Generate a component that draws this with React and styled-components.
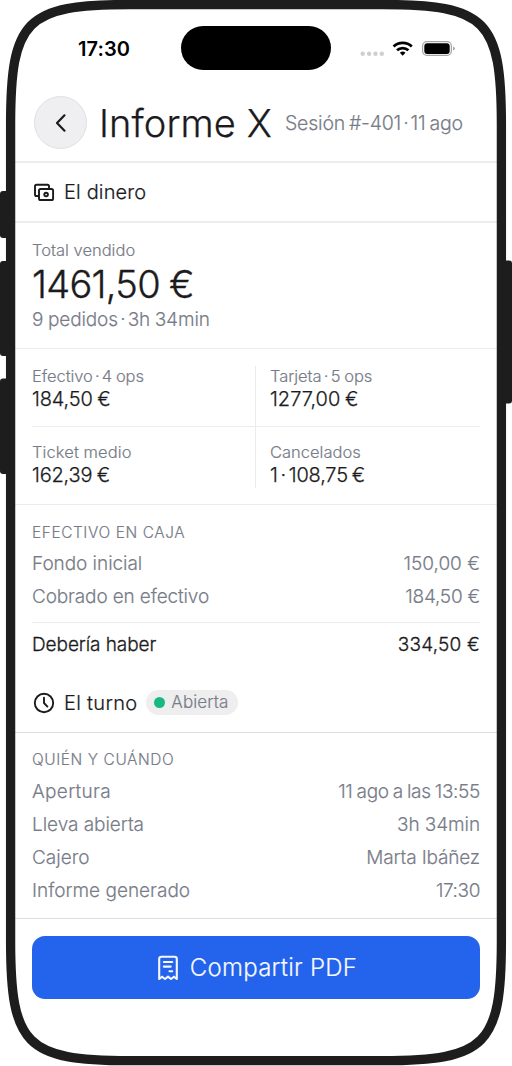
import React from 'react';
import styled, { createGlobalStyle } from 'styled-components';

const ink = '#1b1b1d';
const muted = '#787c88';
const line = '#ececee';

const GlobalStyle = createGlobalStyle`
  * { box-sizing: border-box; }
  body {
    margin: 0;
    background: #fff;
    color: ${ink};
    font-family: Inter, "Liberation Sans", sans-serif;
    font-weight: 300;
    overflow: hidden;
  }
`;

const Device = styled.div`
  position: relative;
  width: 512px;
  height: 1066px;
`;

const Bezel = styled.svg`
  position: absolute;
  inset: 0;
  pointer-events: none;
`;

const Screen = styled.main`
  display: flex;
  flex-direction: column;
  height: 1056px;
  margin: 0 15px;
  padding-top: 9px;
`;

const StatusBar = styled.div`
  display: grid;
  grid-template-columns: 1fr 150px 1fr;
  height: 76px;
  padding: 17px 0 0;
`;

const Clock = styled.time`
  justify-self: start;
  margin-left: 63px;
  font-size: 20px;
  font-weight: 600;
  line-height: 46px;
  color: #000;
  letter-spacing: 0.1px;
`;

const Island = styled.div`
  height: 44px;
  border-radius: 22px;
  background: #000;
`;

const StatusIcons = styled.svg`
  display: block;
  margin: 12px 0 0 26px;
`;

const Header = styled.header`
  display: flex;
  align-items: center;
  height: 78px;
  padding: 0 19px 1px;
  border-bottom: 2px solid ${line};
`;

const BackButton = styled.button`
  display: grid;
  place-items: center;
  width: 53px;
  height: 53px;
  padding: 0;
  border: 1px solid #e0e0e4;
  border-radius: 50%;
  background: #efeff1;
`;

const Text = styled.span`
  letter-spacing: ${({ $track = 0 }) => $track}px;
  word-spacing: ${({ $gap = 0 }) => $gap}px;
  white-space: nowrap;
  -webkit-text-stroke: 0.18px currentColor;
`;

const Separator = styled.span`
  word-spacing: ${({ $gap = -2.4 }) => $gap}px;
`;

const Title = styled(Text).attrs({ as: 'h1' })`
  margin: 0 0 0 12px;
  font-size: 38px;
  font-weight: 300;
  line-height: 48px;
  -webkit-text-stroke-width: 0.25px;
`;

const Session = styled(Text)`
  margin-left: 13px;
  font-size: 19.5px;
  color: ${muted};
`;

const SectionHeader = styled.div`
  display: flex;
  align-items: center;
  height: 60px;
  padding: 0 17px;
  border-bottom: ${({ $thin }) => ($thin ? '1px solid #dededf' : `2px solid ${line}`)};
`;

const SectionTitle = styled(Text).attrs({ as: 'h2' })`
  margin: 0 0 0 8px;
  font-size: 20px;
  font-weight: 300;
  line-height: 26px;
  -webkit-text-stroke-width: 0.22px;
`;

const Badge = styled.span`
  display: flex;
  align-items: center;
  gap: 6px;
  height: 25px;
  margin-left: 9px;
  padding: 0 10px 0 8px;
  border-radius: 13px;
  background: #eeeeef;
  color: ${muted};
  font-size: 17px;
  line-height: 25px;
`;

const Dot = styled.i`
  width: 11px;
  height: 11px;
  border-radius: 50%;
  background: #18b981;
`;

const Summary = styled.section`
  display: flex;
  flex-direction: column;
  height: 126px;
  padding: 16px 17px 0;
  border-bottom: 1px solid ${line};
`;

const Label = styled(Text)`
  font-size: 16.5px;
  line-height: 22px;
  color: ${muted};
`;

const Total = styled(Text)`
  font-size: 38px;
  line-height: 46px;
  -webkit-text-stroke-width: 0.35px;
`;

const Detail = styled(Text)`
  font-size: 19px;
  line-height: 26px;
  color: ${muted};
`;

const Metrics = styled.section`
  display: grid;
  grid-template-columns: 223px 225px;
  height: 156px;
  padding: 17px 17px 16px;
  border-bottom: 1px solid ${line};
`;

const Metric = styled.div`
  display: flex;
  flex-direction: column;
  height: 61px;
  padding-top: ${({ $lower }) => ($lower ? 14 : 0)}px;
  padding-left: ${({ $right }) => ($right ? 14 : 0)}px;
  border-left: ${({ $right }) => ($right ? `1px solid ${line}` : 'none')};
  border-bottom: ${({ $lower }) => ($lower ? 'none' : `1px solid ${line}`)};
`;

const MetricLabel = styled(Label)`
  line-height: ${({ $lower }) => ($lower ? 22 : 21)}px;
`;

const Value = styled(Text)`
  font-size: 20px;
  line-height: 24px;
  -webkit-text-stroke-width: 0.25px;
`;

const Group = styled.section`
  padding: ${({ $top = 16 }) => $top}px 17px 0;
`;

const GroupTitle = styled(Text).attrs({ as: 'h3' })`
  margin: 0 0 ${({ $after = 4 }) => $after}px;
  font-size: 15.4px;
  font-weight: 300;
  line-height: 21px;
  color: ${muted};
`;

const Row = styled.div`
  display: flex;
  justify-content: space-between;
  font-size: 19px;
  line-height: 33.2px;
  color: ${muted};
`;

const TotalRow = styled(Row)`
  margin-top: 9px;
  padding-top: 5px;
  border-top: 1px solid ${line};
  color: ${ink};

  ${Text} {
    -webkit-text-stroke-width: 0.28px;
  }
`;

const ShiftHeader = styled(SectionHeader)`
  margin-top: 12px;
  height: 59px;
`;

const Footer = styled.footer`
  margin-top: 11px;
  padding: 17px 17px 0;
  border-top: 1px solid #dededf;
`;

const ShareButton = styled.button`
  display: flex;
  align-items: center;
  justify-content: center;
  gap: 11px;
  width: 448px;
  height: 63px;
  padding: 0 0 0 2px;
  border: 0;
  border-radius: 13px;
  background: #2463eb;
  color: #f5f9ff;
  font: 300 24px/30px Inter, "Liberation Sans", sans-serif;
`;

function DeviceFrame() {
  return (
    <Bezel width="512" height="1066" viewBox="0 0 512 1066" fill="none" aria-hidden="true">
      <g fill="#1d1d1d">
        <rect x="0" y="191" width="14" height="47" rx="3" />
        <rect x="0" y="261" width="14" height="95" rx="3" />
        <rect x="0" y="378.500" width="14" height="95.500" rx="3" />
        <rect x="498" y="260.500" width="14" height="143" rx="3" />
      </g>
      <path
        d="M10.600 125C10.600 20 25.600 4.500 130 4.500H382C486.400 4.500 501.400 20 501.400 125V941C501.400 1045 486.400 1060.700 382 1060.700H130C25.600 1060.700 10.600 1045 10.600 941Z"
        stroke="#1d1d1d"
        strokeWidth="9.300"
      />
    </Bezel>
  );
}

function StatusGlyphs() {
  return (
    <StatusIcons width="100" height="20" viewBox="0 0 100 20" fill="none" aria-hidden="true">
      <g fill="#cfcfcf">
        <circle cx="5.700" cy="15.700" r="2.200" />
        <circle cx="12.100" cy="15.700" r="2.200" />
        <circle cx="18.500" cy="15.700" r="2.200" />
        <circle cx="24.800" cy="15.700" r="2.200" />
      </g>
      <g stroke="#000" strokeWidth="2.700">
        <path d="M36.600 8.500A13 13 0 0 1 54.800 8.500" />
        <path d="M40 12.300A8.300 8.300 0 0 1 51.400 12.300" />
      </g>
      <path d="M42.900 14.700Q45.700 12.200 48.500 14.700L45.700 17.700Z" fill="#000" />
      <rect x="65.600" y="3.600" width="28.800" height="13.800" rx="4.300" stroke="#a5a5a5" strokeWidth="1.200" />
      <rect x="67.300" y="5.200" width="25.400" height="10.800" rx="2.900" fill="#000" />
      <path d="M96 8.500Q97.800 9.200 97.800 10.500T96 12.500Z" fill="#a5a5a5" />
    </StatusIcons>
  );
}

function ChevronIcon() {
  return (
    <svg width="24" height="24" viewBox="0 0 24 24" fill="none" stroke={ink} strokeWidth="2.200" strokeLinecap="round" strokeLinejoin="round">
      <path d="M15.500 4.300 8 12l7.500 7.700" />
    </svg>
  );
}

function CashIcon() {
  return (
    <svg width="24" height="24" viewBox="0 0 24 24" fill="none" stroke={ink} strokeWidth="1.900" strokeLinejoin="round">
      <path d="M6.800 16H4.600Q3 16 3 14.400V6.300Q3 4.700 4.600 4.700H15.400Q17 4.700 17 6.300V8.600" />
      <rect x="7" y="9" width="14.100" height="11" rx="1.600" />
      <circle cx="14.100" cy="14.500" r="1.800" />
    </svg>
  );
}

function ClockIcon() {
  return (
    <svg width="24" height="24" viewBox="0 0 24 24" fill="none" stroke={ink} strokeWidth="1.900" strokeLinecap="round" strokeLinejoin="round">
      <circle cx="12" cy="12" r="9.200" />
      <path d="M12 6.700V12l3.400 3.600" />
    </svg>
  );
}

function ReceiptIcon() {
  return (
    <svg width="22" height="28" viewBox="0 0 22 28" fill="none" stroke="#f5f9ff" strokeWidth="2.100" strokeLinecap="round" strokeLinejoin="round">
      <path d="M2.200 25V4.900Q2.200 2.700 4.400 2.700H17.600Q19.800 2.700 19.800 4.900V25L16.900 22.700 14 25 11 22.700 8 25 5.100 22.700Z" />
      <path d="M6.800 8H15.200M6.800 12.600H13.700M12.500 17.200H15.200" />
    </svg>
  );
}

export default function App() {
  return (
    <>
      <GlobalStyle />
      <Device>
        <Screen>
          <StatusBar>
            <Clock>17:30</Clock>
            <Island />
            <StatusGlyphs />
          </StatusBar>
          <Header>
            <BackButton aria-label="Volver"><ChevronIcon /></BackButton>
            <Title $track={0.1}>Informe X</Title>
            <Session $track={-0.2} $gap={-1.4}>Sesión #-401<Separator $gap={-3.2}> · </Separator>11 ago</Session>
          </Header>

          <SectionHeader>
            <CashIcon />
            <SectionTitle $track={0.15}>El dinero</SectionTitle>
          </SectionHeader>
          <Summary>
            <Label>Total vendido</Label>
            <Total $track={-0.7} $gap={-1}>1461,50 €</Total>
            <Detail $track={-0.12} $gap={-0.6}>9 pedidos<Separator $gap={-3}> · </Separator>3h 34min</Detail>
          </Summary>
          <Metrics>
            <Metric>
              <MetricLabel $track={-0.06} $gap={-0.8}>Efectivo<Separator> · </Separator>4 ops</MetricLabel>
              <Value $track={-0.15} $gap={-1}>184,50 €</Value>
            </Metric>
            <Metric $right>
              <MetricLabel $track={-0.05} $gap={-0.8}>Tarjeta<Separator> · </Separator>5 ops</MetricLabel>
              <Value $gap={-1}>1277,00 €</Value>
            </Metric>
            <Metric $lower>
              <MetricLabel $lower $track={0.08}>Ticket medio</MetricLabel>
              <Value $track={-0.2} $gap={-1}>162,39 €</Value>
            </Metric>
            <Metric $right $lower>
              <MetricLabel $lower>Cancelados</MetricLabel>
              <Value $track={-0.2} $gap={-1.5}>1<Separator $gap={-2.6}> · </Separator>108,75 €</Value>
            </Metric>
          </Metrics>

          <Group $top={17}>
            <GroupTitle $track={0.6}>EFECTIVO EN CAJA</GroupTitle>
            <Row>
              <Text $track={-0.05}>Fondo inicial</Text>
              <Text>150,00 €</Text>
            </Row>
            <Row>
              <Text $track={-0.14}>Cobrado en efectivo</Text>
              <Text $track={-0.25}>184,50 €</Text>
            </Row>
            <TotalRow>
              <Text $track={-0.08}>Debería haber</Text>
              <Text $track={0.2}>334,50 €</Text>
            </TotalRow>
          </Group>

          <ShiftHeader $thin>
            <ClockIcon />
            <SectionTitle $track={0.3}>El turno</SectionTitle>
            <Badge><Dot /><Text $track={0.1}>Abierta</Text></Badge>
          </ShiftHeader>
          <Group>
            <GroupTitle $track={0.6} $after={5}>QUIÉN Y CUÁNDO</GroupTitle>
            <Row>
              <Text $track={0.3}>Apertura</Text>
              <Text $track={-0.34} $gap={-0.9}>11 ago a las 13:55</Text>
            </Row>
            <Row>
              <Text $track={-0.05}>Lleva abierta</Text>
              <Text $track={-0.1}>3h 34min</Text>
            </Row>
            <Row>
              <Text>Cajero</Text>
              <Text $track={-0.15}>Marta Ibáñez</Text>
            </Row>
            <Row>
              <Text>Informe generado</Text>
              <Text $track={-0.4}>17:30</Text>
            </Row>
          </Group>
          <Footer>
            <ShareButton>
              <ReceiptIcon />
              <Text $track={0.25}>Compartir PDF</Text>
            </ShareButton>
          </Footer>
        </Screen>
        <DeviceFrame />
      </Device>
    </>
  );
}
